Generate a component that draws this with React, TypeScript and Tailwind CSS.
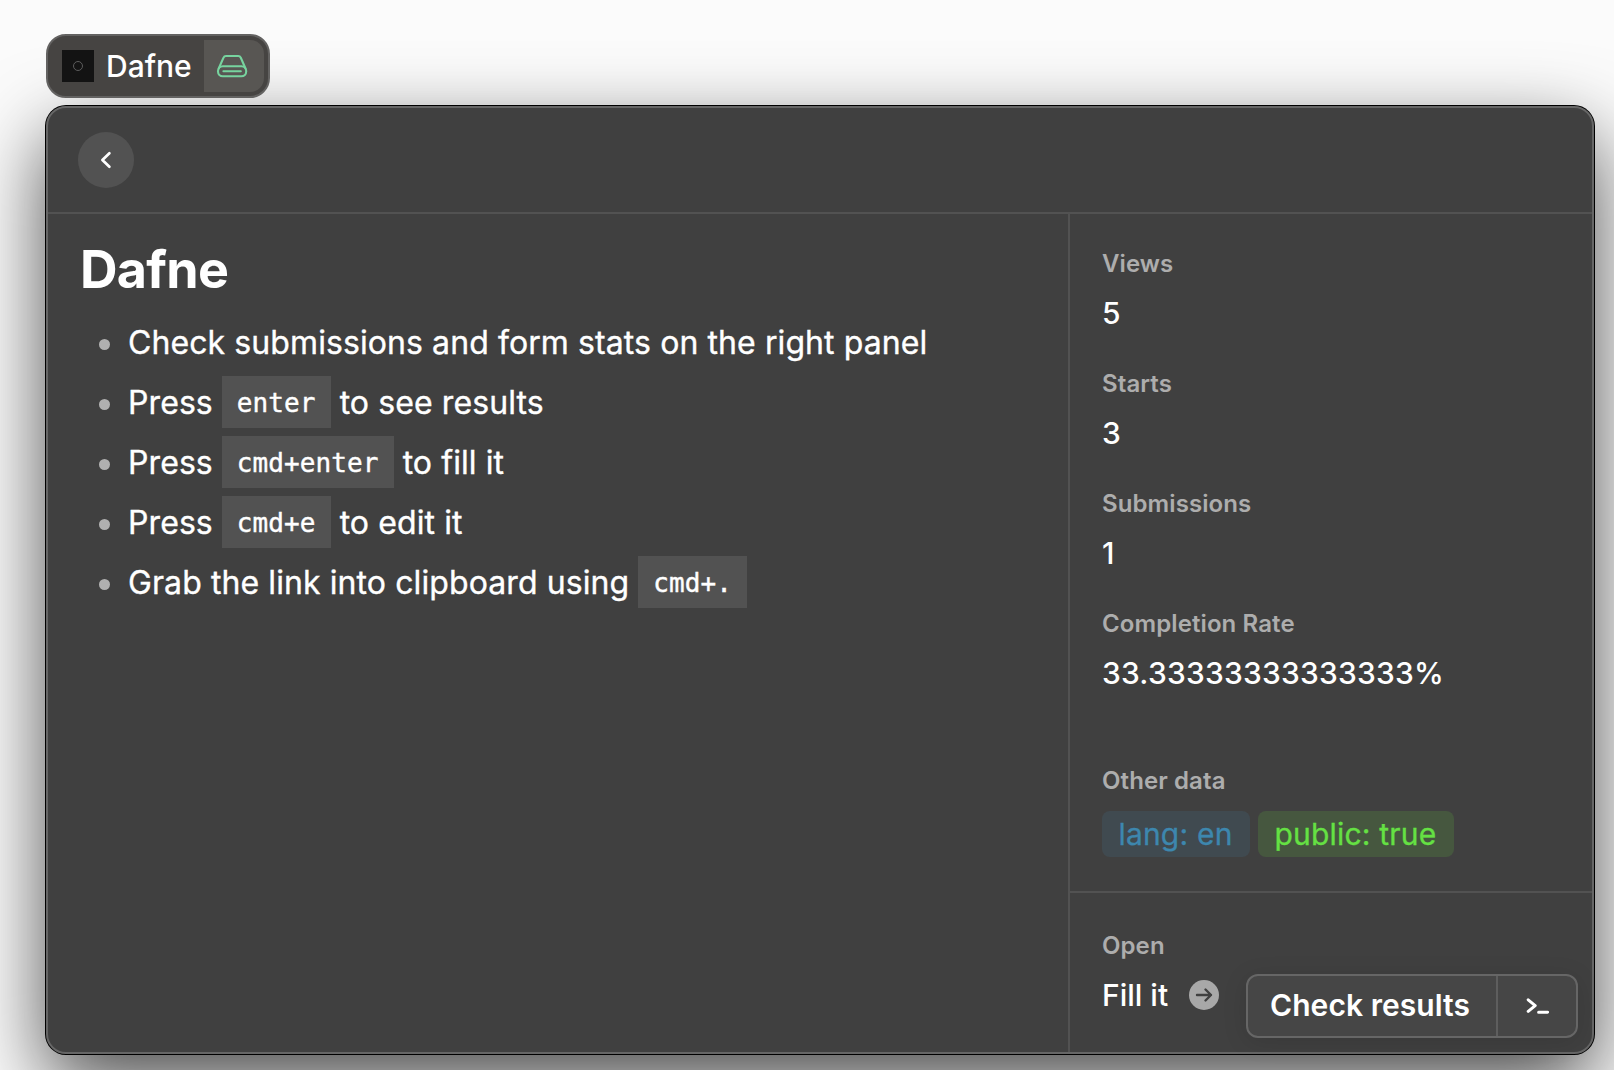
import React from "react";

const stats = [
  ["Views", "5"],
  ["Starts", "3"],
  ["Submissions", "1"],
  ["Completion Rate", "33.33333333333333%"],
];

function DriveIcon() {
  return (
    <svg className="mr-1 size-9" viewBox="0 0 36 36" fill="none" stroke="#77d49f" strokeWidth="2.1" strokeLinejoin="round" strokeLinecap="round">
      <path d="M4.7 20.5 9.4 9.8Q10.2 8 12 8H24.2Q26 8 26.8 9.8L31.5 20.5" />
      <rect x="4" y="18.3" width="28.2" height="10" rx="4.8" />
      <path d="M9.4 23.3H26.8" />
    </svg>
  );
}

function Key({ children }: { children: string }) {
  return (
    <code className="-mt-[2px] flex h-[52px] items-center bg-[#525252] px-[15px] pt-[3px] font-['DejaVu_Sans_Mono',monospace] text-[26px] tracking-[0.1px] [-webkit-text-stroke:0.4px_white]">
      {children}
    </code>
  );
}

function Item({ children }: { children: React.ReactNode }) {
  return (
    <li className="flex h-[60px] items-center">
      <span className="mt-[3px] mr-[18px] size-[11px] rounded-full bg-[#b0b0b0]" />
      <div className="flex items-center gap-[9px] whitespace-pre">{children}</div>
    </li>
  );
}

function Label({ children }: { children: string }) {
  return <div className="h-[50px] text-2xl leading-[50px] font-semibold tracking-[0.1px] text-[#adadad]">{children}</div>;
}

export default function App() {
  return (
    <div className="h-[1070px] w-[1614px] overflow-hidden bg-[#fbfbfb] pt-[34px] pl-[46px] font-['Inter',sans-serif] text-white">
      <div className="relative z-10 flex h-16 w-[224px] items-center rounded-[20px] border-2 border-[#636261] bg-[#464442] pl-[14px]">
        <div className="flex size-8 items-center justify-center bg-[#131313]">
          <span className="size-[10px] rounded-full border border-[#5c5c5c]" />
        </div>
        <span className="ml-3 w-[98px] text-[30px] leading-none font-medium">Dafne</span>
        <div className="flex h-[52px] w-[60px] items-center justify-center rounded-r-[14px] bg-[#585653]">
          <DriveIcon />
        </div>
      </div>

      <div className="mt-2 flex h-[948px] w-[1548px] flex-col rounded-[20px] border-2 border-[#666666] bg-[#404040] shadow-[0_0_0_1px_#000,0_30px_80px_rgba(0,0,0,0.7)]">
        <header className="flex h-[106px] shrink-0 items-center border-b-2 border-[#525252] pl-[30px]">
          <button className="flex size-14 items-center justify-center rounded-full bg-[#525252]">
            <svg className="size-6" viewBox="0 0 24 24" fill="none" stroke="white" strokeWidth="2.7" strokeLinecap="round" strokeLinejoin="round">
              <path d="M15.4 5.2 8.4 12 15.4 18.8" />
            </svg>
          </button>
        </header>
        <div className="flex min-h-0 flex-1">
          <main className="flex-1 pl-8">
            <h1 className="mt-[24px] h-[64px] text-[52px] leading-[64px] font-bold tracking-[-0.7px]">Dafne</h1>
            <ul className="mt-[11px] ml-[19px] text-[32px] tracking-[0.09px] [-webkit-text-stroke:0.35px_white]">
              <Item>Check submissions and form stats on the right panel</Item>
              <Item><span>Press</span><Key>enter</Key><span>to see results</span></Item>
              <Item><span>Press</span><Key>cmd+enter</Key><span>to fill it</span></Item>
              <Item><span>Press</span><Key>cmd+e</Key><span>to edit it</span></Item>
              <Item><span>Grab the link into clipboard using</span><Key>cmd+.</Key></Item>
            </ul>
          </main>
          <aside className="flex w-[524px] flex-col border-l-2 border-[#525252]">
            <section className="h-[679px] border-b-2 border-[#525252] pt-[25px] pl-8">
              {stats.map(([label, value]) => (
                <div key={label} className="h-[120px]">
                  <Label>{label}</Label>
                  <div className="h-[50px] text-[30px] leading-[48px] font-medium tracking-[0.2px]">{value}</div>
                </div>
              ))}
              <div className="mt-[37px]">
                <Label>Other data</Label>
                <div className="mt-[5px] flex gap-2 text-[30px] leading-[47px] tracking-[0.2px]">
                  <span className="h-[46px] w-[148px] rounded-lg bg-[#404a50] pr-px text-center text-[#3d87ae] [-webkit-text-stroke:0.3px_#3d87ae]">lang: en</span>
                  <span className="h-[46px] w-[196px] rounded-lg bg-[#46573f] pr-px text-center text-[#65e143] [-webkit-text-stroke:0.3px_#65e143]">public: true</span>
                </div>
              </div>
            </section>
            <section className="flex-1 pt-7 pl-8">
              <Label>Open</Label>
              <div className="-mt-px flex items-start">
                <span className="w-[87px] text-[30px] leading-[50px] font-medium">Fill it</span>
                <svg className="mt-[10px] size-[30px]" viewBox="0 0 30 30" fill="none">
                  <circle cx="15" cy="15" r="15" fill="#a8a8a8" />
                  <path d="M8 15H22M16.5 9.5 22 15 16.5 20.5" stroke="#404040" strokeWidth="2.4" strokeLinecap="round" strokeLinejoin="round" />
                </svg>
                <div className="mt-1 ml-[27px] flex h-16 w-[332px] rounded-[12px] border-2 border-[#666666] bg-[#464646] shadow-[0_4px_24px_rgba(0,0,0,0.12)]">
                  <button className="w-[250px] border-r-2 border-[#5e5e5e] pr-1 pb-[2px] text-center text-[30px] leading-[58px] font-semibold tracking-[0.05px]">Check results</button>
                  <button className="flex flex-1 items-center justify-center">
                    <svg className="size-6" viewBox="0 0 24 24" fill="none" stroke="white" strokeWidth="3" strokeLinecap="round" strokeLinejoin="round">
                      <path d="M3.2 5.8 10.2 11.6 3.2 17.4M13.6 18.2H22.6" />
                    </svg>
                  </button>
                </div>
              </div>
            </section>
          </aside>
        </div>
      </div>
    </div>
  );
}
